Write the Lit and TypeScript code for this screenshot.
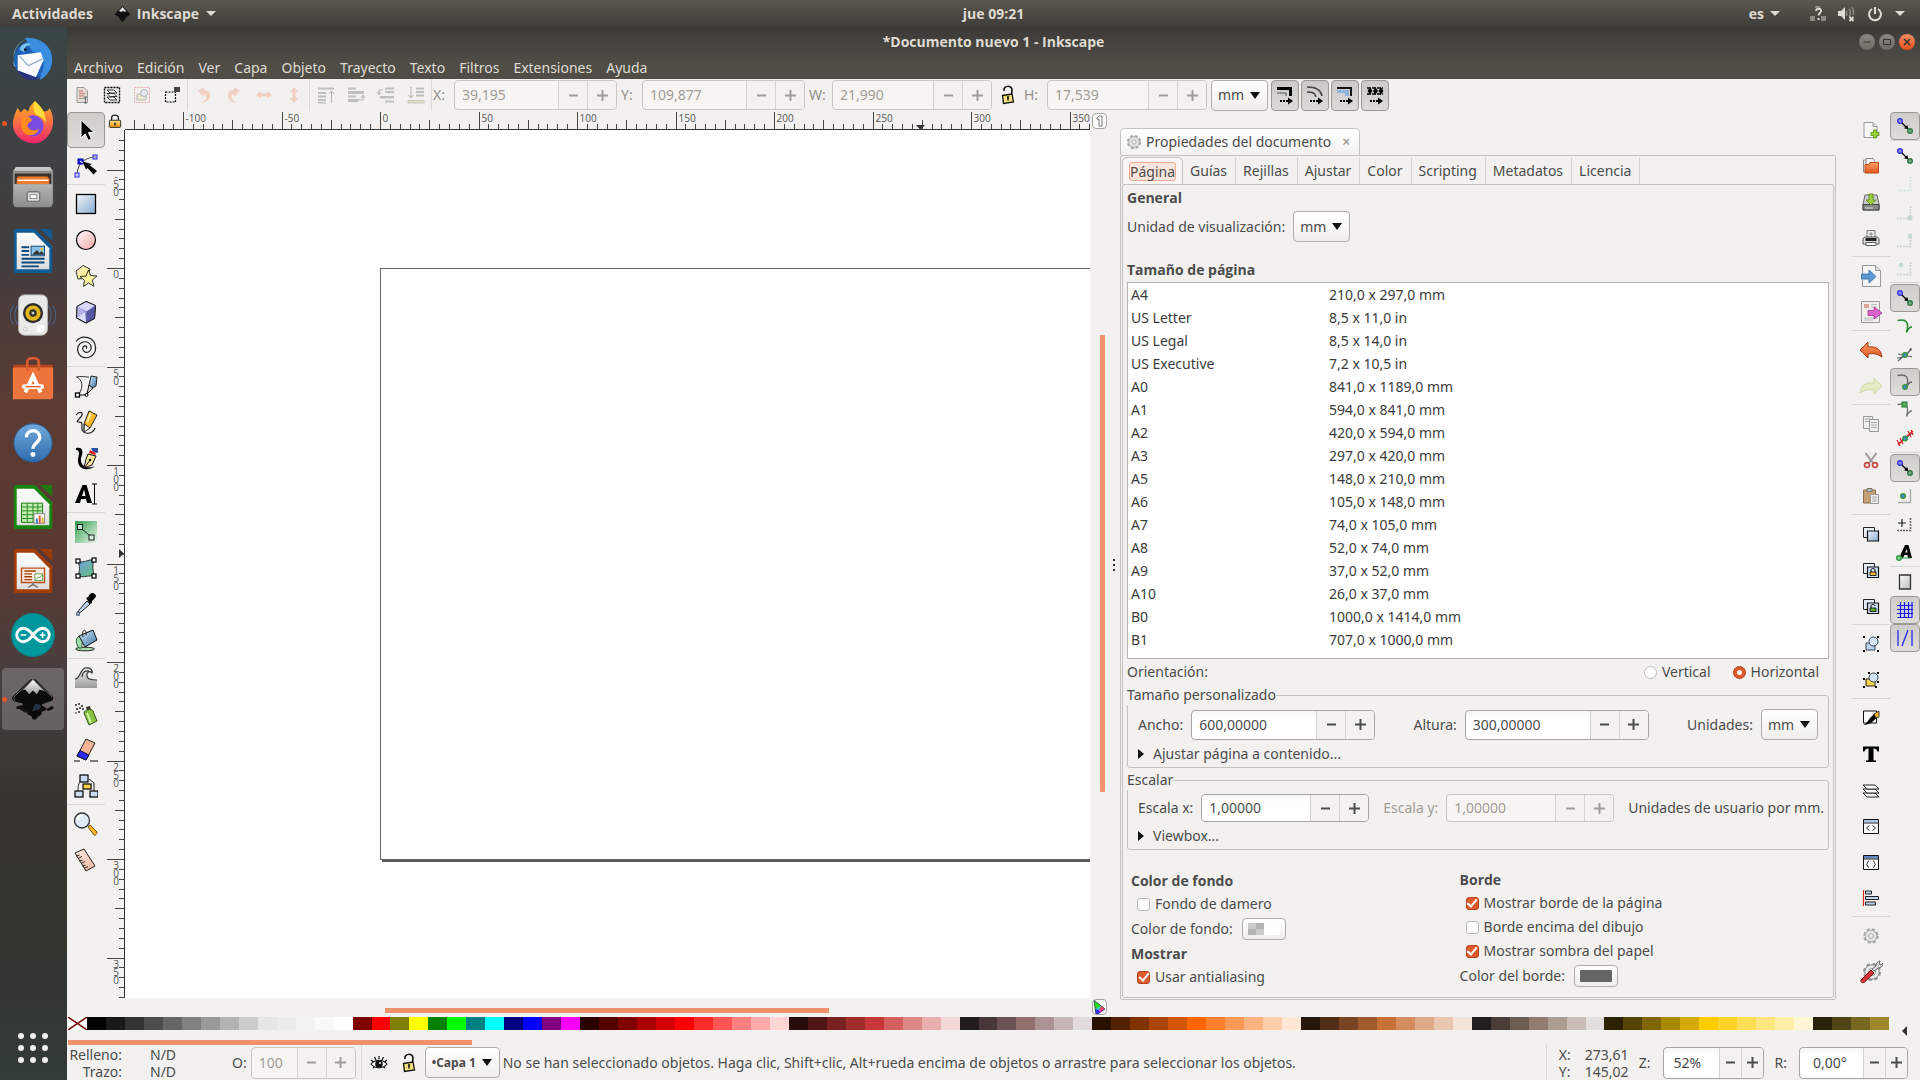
import { LitElement, html, svg, css, TemplateResult } from "lit";
import { customElement } from "lit/decorators.js";
import { classMap } from "lit/directives/class-map.js";

type Shape = ReturnType<typeof svg>;

const nodeDot = (x: number, y: number, c = "#2f9a3c", f = "#4f7fd0") =>
  svg`<circle cx=${x} cy=${y} r="2.3" fill=${f} stroke=${c} stroke-width="1.4"/>`;

const snapArrow = svg`
  <circle cx="7" cy="7" r="2.3" fill="#8f8ff5" stroke="#3535e0" stroke-width="1.4"/>
  <path d="M9 9l5 5" stroke="#000" stroke-width="1.3"/><path d="M15.5 15.5l-4.4-1.2 3.2-3.2z"/>
  ${nodeDot(17, 17, "#2f7a46", "#6fb08a")}`;

const orderBars = (arrow: Shape) => svg`<g fill="#777">${arrow}</g>`;

/* 24x24 glyphs of the tool, command and snap bars */
const glyphs: Record<string, Shape> = {
  /* tool bar */
  select: svg`<path d="M7 2v18l4.2-4 3 6.4 3.2-1.5-3-6.3h5.8z" stroke="#fff" stroke-width="1"/>`,
  node: svg`<path d="M3 20C4 9 10 4 21 3" fill="none" stroke="#555" stroke-width="1.1"/>
    <rect x="19" y="1" width="4" height="4" fill="#aab" stroke="#4848e8" stroke-width="1.2"/>
    <rect x="1" y="19" width="4" height="4" fill="#ccf" stroke="#4848e8" stroke-width="1.2"/>
    <rect x="4" y="5" width="5" height="5" fill="#2222d8" stroke="#0000a0"/><path d="M8.500 7.500l3.500 8 1.500-1.500 6 6.500 3.500-3.500-7-5.500 1.500-1.500z"/><path d="M6 7l3 2" stroke="#fff"/>`,
  rect: svg`<rect x="2.500" y="2.500" width="19" height="19" fill="url(#g-blue)" stroke="#000" stroke-width="1.3"/>`,
  ellipse: svg`<circle cx="12" cy="12" r="9.500" fill="url(#g-pink)" stroke="#000" stroke-width="1.200"/>`,
  star: svg`<path d="M2 7l7-5.500 7 3.500-2 9-10 1z" fill="url(#g-yellow)" stroke="#333"/>
    <path d="M14.500 6l2.200 5.500 6.300.5-4.700 4 1.700 6.300-5.500-3.300-5 3.500 1-6.300-4.500-3.700 6-.500z" fill="#fdf3a0" stroke="#333"/>`,
  cube: svg`<path d="M12 1.500l9.500 4-1 13L12 23l-9.500-5 .5-11.500z" fill="#8787cf" stroke="#222"/>
    <path d="M3 6.500l9-5 9.500 4-8.500 6z" fill="#d6d6f6"/><path d="M3 6.500l8 5-8.500 6z" fill="#b3b3ea"/><path d="M12.500 11.500l9-6-1 13L12 23z" fill="#5757a8"/><path d="M11 12l-8 5.500 9 5z" fill="#dcdcfa"/>
    <path d="M12 1.500l9.500 4-1 13L12 23l-9.500-5 .5-11.500z" fill="none" stroke="#222"/>`,
  spiral: svg`<path d="M12 12.500c1.500-1 .500-3-1.300-2.600-2.500.600-2.700 4.100-.500 5.600 3 2 7-.200 7-4 0-4-4-6.500-8-5.500-5 1.300-7 7-4.700 11.500 2.500 4.500 8.500 5.500 13 2.500 3.500-2.500 5-6.500 3.500-11.500-1.500-5-6-7.300-11-7.300-3 0-6 1.800-7.800 4.300" fill="none" stroke="#222" stroke-width="1.200"/>`,
  pen: svg`<path d="M2 3c5-1 10 0 13 0M3 3c5 3 7 9 2 17" fill="none" stroke="#333"/><path d="M4 21h9" stroke="#000"/>
    <rect x="1.500" y="19" width="4" height="4" fill="#fff" stroke="#000" stroke-width="1.300"/><circle cx="12.500" cy="21" r="1.500" fill="#fff" stroke="#000"/>
    <path d="M17 2l6 1-1 9-4 2-3-3z" fill="url(#g-steel)" stroke="#222"/><path d="M15 11l4 3-6 6z" fill="#ddd" stroke="#000"/>`,
  pencil: svg`<path d="M2 5c3-4 7-3 6 0s-7 7-4 7 4 0 4 3-1 7 4 8 8-2 9-5" fill="none" stroke="#222" stroke-width="1.200"/>
    <path d="M15 1l8 4-7 13-6 3 0-7z" fill="#fbb829" stroke="#222"/><path d="M10.500 14l5.500 4-6 4z" fill="#fff" stroke="#333"/><path d="M17 3l-4 9" stroke="#fff0a0" stroke-width="2"/>`,
  calligraphy: svg`<path d="M2 2c8-2 7 5 5 10-1 7 5 12 14 8-7 6-18 4-17-7C5 8 6 4 2 4z"/>
    <path d="M17 2h7v5l-5-1z" fill="#2b4fa0"/><path d="M16 4l6 3-1 2-6-2z" fill="#d22"/><path d="M14 8l8 2-4 9-8 3 2-9z" fill="#f9e29a" stroke="#111"/><path d="M11 21l5-7" stroke="#111"/><circle cx="16" cy="14" r="1.200"/>`,
  text: svg`<path d="M1 21L8.500 3h4L18 21h-5l-1-4H7l-1 4zM8 14h3.500L10 7.500z" fill-rule="evenodd"/><path d="M18 2h5M20.500 2v20M18 22h5" stroke="#000" fill="none"/>`,
  gradient: svg`<rect x="1" y="1" width="22" height="22" fill="url(#g-green)"/><path d="M6 7l11 10" stroke="#222"/><rect x="3.500" y="4.500" width="5" height="5" fill="#bfe6c8" stroke="#222"/><rect x="15" y="15" width="5" height="5" fill="#d8f2dc" stroke="#222"/>`,
  mesh: svg`<path d="M4 5c6 3 9-2 16-1-2 6-1 10 0 16-6-1-9 2-16 0 2-6 2-9 0-15z" fill="url(#g-mesh)" stroke="#333"/>
    <g fill="#fff" stroke="#000" stroke-width="1.200"><rect x="2" y="3" width="4" height="4"/><rect x="18" y="2" width="4" height="4"/><rect x="2" y="18" width="4" height="4"/><rect x="18" y="18" width="4" height="4"/></g>`,
  dropper: svg`<path d="M13 9l3 3-9 8-3 1 1-3z" fill="#b9d6f2" stroke="#222"/><path d="M12 6l2-1 2-3c3-3 8 1 5 4l-3 3v2l-2 1z"/><path d="M4 19c2 3 2 5 0 5s-2-2 0-5z" fill="#89a7d8" stroke="#456"/>`,
  bucket: svg`<ellipse cx="11" cy="21" rx="9.500" ry="1.800" fill="#a8e0b2" stroke="#222"/><path d="M5 8c-4 3-3 8 0 12h3c-1-4 1-5 1-8z" fill="#9fdcab" stroke="#2c5a36"/>
    <path d="M5 8l14-6 4 10-12 7z" fill="url(#g-steel)" stroke="#111"/><path d="M9 9c-2-8 4-9 3-2" fill="none" stroke="#222"/>`,
  tweak: svg`<path d="M1 13c5 0 5-9 10-11 5-1 8 2 7 5-3-3-6 0-5 3 0 3 4 4 10 4v8H1z" fill="url(#g-grey)"/><path d="M1 13c5 0 5-9 10-11 5-1 8 2 7 5-3-3-6 0-5 3 0 3 4 4 10 4M8 11c0-4 3-7 7-6" fill="none" stroke="#333" stroke-width="1.200"/>`,
  spray: svg`<g fill="#222"><circle cx="2" cy="3" r="1"/><circle cx="5" cy="2" r="1"/><circle cx="8" cy="4" r="1"/><circle cx="3" cy="7" r="1"/><circle cx="6" cy="6" r="1"/><circle cx="9" cy="7" r="1"/><circle cx="5" cy="10" r="1"/><circle cx="2" cy="11" r=".8"/></g>
    <path d="M12 5l4-1 1 4-4 1z" fill="#333"/><path d="M10 11c0-3 8-5 9-2l4 10-8 4z" fill="#86c440" stroke="#33511a"/><path d="M13 11l4 10" stroke="#d6f0a8" stroke-width="2"/>`,
  eraser: svg`<path d="M12 1l9 4-9 17-9-4z" fill="#f4b295" stroke="#222"/><path d="M6 12.500l9 4.500-3 5-9-4z" fill="#2a2af0" stroke="#113"/><path d="M0 23h6M16 23h8" stroke="#000" stroke-width="1.200"/>`,
  connector: svg`<path d="M8 6C4 9 4 13 4 17M15 5l5 4v8" fill="none" stroke="#222"/><g stroke="#000" stroke-width="1.200"><rect x="6" y="1" width="8" height="7" fill="#c9dbf3"/><rect x="1" y="17" width="8" height="6" fill="#c9dbf3"/><rect x="16" y="17" width="8" height="6" fill="#c9dbf3"/><rect x="9" y="10" width="8" height="5" fill="#ffd54a"/></g>`,
  zoom: svg`<circle cx="8" cy="8.500" r="7.500" fill="#dfeaf6" stroke="#333" stroke-width="1.300"/><path d="M4 8a5 5 0 0 1 5-5" stroke="#fff" stroke-width="2" fill="none"/><path d="M14 15l2-2 7 7c0 2-2 4-3 3z" fill="#fbb62c" stroke="#7a5200"/>`,
  measure: svg`<path d="M1 5l9-4 11 17-9 5z" fill="url(#g-skin)" stroke="#222"/><path d="M2.500 8l3-1M4 10.500l4-2M5.500 13l3-1M7 15.500l4-2M8.500 18l3-1M10 20.500l4-2" stroke="#222"/>`,
  /* command bar */
  fileNew: svg`<path d="M5 4.500h9l4 4v11H5z" fill="#f6f6f6" stroke="#999"/><path d="M14 4.500v4h4" fill="#ddd" stroke="#999"/><path d="M14.500 12h3v2.500H20v3h-2.500V20h-3v-2.500H12v-3h2.500z" fill="#9bd23c" stroke="#5a8a12" stroke-width=".8"/>`,
  fileOpen: svg`<path d="M4.500 6h5v12h-5z" fill="#eee" stroke="#888"/><path d="M7 4.500h7l2 3v5H7z" fill="#f6f6f6" stroke="#888"/><path d="M6 10.500h4l1-2h8.500v10.500H6z" fill="url(#g-orange)" stroke="#c64a16"/>`,
  save: svg`<path d="M6 5h12l2 9v6H4v-6z" fill="#ccc" stroke="#666"/><path d="M4 14.500h16V20H4z" fill="#888" stroke="#444"/><path d="M10 4h4v6h3l-5 5-5-5h3z" fill="#9ccf3e" stroke="#568015" stroke-width=".8"/><path d="M6 18h8" stroke="#ddd"/>`,
  print: svg`<path d="M8 4.500h8V12H8z" fill="#eee" stroke="#777"/><path d="M12 6v5M10 8h4" stroke="#888"/><path d="M5.500 11h13l1.500 2v5H4v-5z" fill="#ddd" stroke="#555"/><path d="M6.500 12h11v3h-11z" fill="#222"/><path d="M7 16.500h10v3H7z" fill="#fff" stroke="#555"/>`,
  fileImport: svg`<path d="M3.500 1.500h13l5 5v16h-18z" fill="#f3f3f3" stroke="#999"/><path d="M16.500 1.500v5h5" fill="#ddd" stroke="#999"/><path d="M2.500 10H10V6l7 6.500L10 19v-4H2.500z" fill="#5c9bd6" stroke="#2d679f" stroke-width=".8"/>`,
  fileExport: svg`<path d="M2.500 1.500h18v21h-18z" fill="#f1eeee" stroke="#999"/><path d="M5 4.500h5M5 7h5M12 4.500h6M12 7h6M5 18h13M5 20h9" stroke="#bbb"/><path d="M5 4h5v4H5z" fill="#d9a69a"/><path d="M9 10.500h6V7l8 6-8 6v-3.500H9z" fill="#dc62cf" stroke="#98308c" stroke-width=".8"/>`,
  undo: svg`<path d="M1 12l8-8v5c8-1 13 2 14 10-4-3-8-4-14-3v4z" fill="url(#g-orange)" stroke="#a33c12"/>`,
  redo: svg`<path d="M23 12l-8-8v5C7 8 2 11 1 19c4-3 8-4 14-3v4z" fill="#e3ecc4" stroke="#cdd8a8"/>`,
  copy: svg`<g fill="#eee" stroke="#999"><path d="M4.500 4.500h9v12h-9z"/><path d="M10.500 7.500h9v12h-9z"/></g><path d="M6 7h6M6 9.500h4M12 10.500h6M12 13h6M12 15.500h6" stroke="#aaa"/>`,
  cut: svg`<path d="M6.500 5l7.500 10M17.500 5L10 15" stroke="#999" stroke-width="2"/><circle cx="8" cy="17" r="2.400" fill="none" stroke="#cf4b4b" stroke-width="1.800"/><circle cx="16" cy="17" r="2.400" fill="none" stroke="#cf4b4b" stroke-width="1.800"/>`,
  paste: svg`<path d="M4.500 6h12v13h-12z" fill="#c79f74" stroke="#8e6f4c"/><path d="M8 4.500h5v3H8z" fill="#bbb" stroke="#777"/><path d="M11.500 10.500h8v9h-8z" fill="#eee" stroke="#999"/><path d="M13 13h5M13 15h5M13 17h5" stroke="#aaa"/>`,
  duplicate: svg`<path d="M4.500 5.500h11v10h-11z" fill="#e8eef6" stroke="#222"/><path d="M8.500 9h11v10h-11z" fill="url(#g-blue)" stroke="#111" stroke-width="1.200"/>`,
  clone: svg`<path d="M4.500 5.500h11v10h-11z" fill="#e8eef6" stroke="#222"/><path d="M8.500 9h11v10.500h-11z" fill="#cfe0f2" stroke="#111" stroke-width="1.200"/><path d="M12 14v-2c0-2 4-2 4 0v2" fill="none" stroke="#000"/><path d="M11 14h6v3.500h-6z" fill="#f6b73c" stroke="#000" stroke-width=".8"/>`,
  unlink: svg`<path d="M4.500 5.500h11v10h-11z" fill="#e8eef6" stroke="#222"/><path d="M8.500 9h11v10.500h-11z" fill="#cfe0f2" stroke="#111" stroke-width="1.200"/><path d="M12 14v-2c0-2 4-2 4 0" fill="none" stroke="#000"/><path d="M11 14h6v3.500h-6z" fill="#5aae3a" stroke="#000" stroke-width=".8"/>`,
  group: svg`<path d="M7 11h9v7H7z" fill="#bcd3ee" stroke="#345"/><circle cx="14.500" cy="9.500" r="4.500" fill="#d3e2f4" stroke="#345"/><path d="M4 4h2v2H4zM18 4h2v2h-2zM4 18h2v2H4zM18 18h2v2h-2z"/>`,
  ungroup: svg`<path d="M7 11h9v7H7z" fill="#ffd54a" stroke="#222"/><circle cx="14.500" cy="9.500" r="4.500" fill="#d3e2f4" stroke="#345"/><path d="M4 10h2v2H4zM4 18h2v2H4zM16 18h2v2h-2zM9 4h2v2H9zM18 4h2v2h-2zM18 13h2v2h-2z"/>`,
  fillStroke: svg`<path d="M4.500 5h13v12h-13z" fill="#fff" stroke="#111"/><path d="M4 19c3-1 5-4 7-7l5-5 3 3c-4 5-8 9-15 9z"/><path d="M15 8l5-3v6l-3 1z" fill="#f7b52a" stroke="#222" stroke-width=".8"/>`,
  textDialog: svg`<path d="M4 4.500h16v5h-1.500c-.5-2-1.500-3-4-3V17c0 1 .5 1.500 2.500 1.500V20H7v-1.500c2 0 2.500-.5 2.500-1.500V6.500c-2.500 0-3.500 1-4 3H4z"/>`,
  layers: svg`<g fill="#fff" stroke="#222"><path d="M4 15h12l4 4H8z"/><path d="M4 11h12l4 4H8z"/><path d="M4 7h12l4 4H8z"/></g>`,
  xml: svg`<path d="M4.500 5.500h15v14h-15z" fill="#f8f8f8" stroke="#111"/><path d="M5 6h14v2.500H5z" fill="#a9c6e8"/><path d="M4.500 9h15" stroke="#222"/><path d="M10.500 11.500L7.500 14l3 2.500M13.500 11.500l3 2.500-3 2.500" fill="none" stroke="#333"/>`,
  selectors: svg`<path d="M4.500 5.500h15v14h-15z" fill="#f8f8f8" stroke="#111"/><path d="M5 6h14v2.500H5z" fill="#5d85c4"/><path d="M4.500 9h15" stroke="#222"/><path d="M10 11c-2 0-1 3-2.500 3.300C9 14.500 8 17.500 10 17.500M14 11c2 0 1 3 2.500 3.300-1.500.2-.5 3.200-2.500 3.200" fill="none" stroke="#333"/>`,
  align: svg`<path d="M4.500 4v16" stroke="#d22" stroke-width="1.200"/><g fill="#b9d2ee" stroke="#222"><path d="M6.500 5h6v3h-6z"/><path d="M6.500 10.500h13v3h-13z"/><path d="M6.500 16h10v3h-10z"/></g>`,
  gear: svg`<circle cx="12" cy="12" r="6.300" fill="#ddd" stroke="#aaa" stroke-width="3" stroke-dasharray="3 1.950"/><circle cx="12" cy="12" r="5.800" fill="#e4e4e4" stroke="#aaa"/><circle cx="12" cy="12" r="2.300" fill="#eee" stroke="#aaa"/>`,
  tools: svg`<circle cx="13" cy="12" r="7.600" fill="#e6e6e6" stroke="#999" stroke-width="3" stroke-dasharray="3.500 2.500"/><circle cx="13" cy="12" r="7.200" fill="#e9e9e9" stroke="#888"/><circle cx="13" cy="12" r="3.500" fill="#f2f1f0" stroke="#999"/>
    <path d="M2 20L12 10l3 3L5 22.500c-2 1-4-1-3-2.500z" fill="#d0343a" stroke="#86151a"/><path d="M13 9l4-3c0-3 2-5 4-5l-1 3 2 1 2-2c0 3-2 5-5 5l-4 3z" fill="#ddd" stroke="#666"/>`,
  /* snap bar */
  snap: snapArrow,
  snapBox: svg`<path d="M5 18.500h12.500V5" fill="none" stroke="#d9e8da" stroke-width="2" stroke-dasharray="2 1"/>`,
  snapEdge: svg`<path d="M4 18.500h13.500V5" fill="none" stroke="#d3d7d3" stroke-width="2" stroke-dasharray="2 1"/><circle cx="17" cy="18" r="2.600" fill="#c3dacb"/>`,
  snapCorner: svg`<path d="M4 18.500h13.500V5" fill="none" stroke="#d3d7d3" stroke-width="2" stroke-dasharray="2 1"/><circle cx="17" cy="8" r="2.400" fill="#c3dacb"/>`,
  snapMid: svg`<path d="M4 18.500h13.500V5" fill="none" stroke="#d3d7d3" stroke-width="2" stroke-dasharray="2 1"/><circle cx="8" cy="9" r="2.200" fill="#c3dacb"/>`,
  snapPath: svg`<path d="M4.500 6.500c9-2 12 2 9 11.500M19 13c-2 0-4 2-5.500 5.500" fill="none" stroke="#1f8a2a" stroke-width="1.500"/>`,
  snapCross: svg`<path d="M5 19L19 7M4 16c6 0 11-3 14-10M5 12l14 3" fill="none" stroke="#666" stroke-width="1.200"/>${nodeDot(12, 13)}`,
  snapCusp: svg`<path d="M4.500 5.500c9-2 12 2 9 11.500M19 12c-2 0-4 1-5 5" fill="none" stroke="#666" stroke-width="1.300"/>${nodeDot(12, 17)}`,
  snapSmooth: svg`<path d="M4.500 6.500c9-2 12 2 9 11.500M19 13c-2 0-4 2-5.500 5.500" fill="none" stroke="#777" stroke-width="1.300"/><rect x="9" y="4" width="5" height="5" fill="#55b065" stroke="#1f7a2a"/>`,
  snapLine: svg`<path d="M5 18L19 7" stroke="#666" stroke-width="1.300"/><path d="M4 14l3 6M7 12l3 6M5 19l5-5M15 5l3 6M18 4l2 5M14 10l6-5" stroke="#d22" stroke-width="1.300"/>${nodeDot(12, 12.500)}`,
  snapCenter: svg`<path d="M5 18.500h12.500V5" fill="none" stroke="#aaa" stroke-width="1.300"/>${nodeDot(10, 12)}`,
  snapRot: svg`<path d="M4 18.500h13.500V6" fill="none" stroke="#666" stroke-width="1.600" stroke-dasharray="2 1"/><path d="M9 7v8M5 11h8" stroke="#222" stroke-width="1.200"/>`,
  snapText: svg`<path d="M6 18l6-13h3.500L19 18h-4l-.5-3h-3L10 18zM12 12.500h2.300L14 9z" fill-rule="evenodd"/><path d="M4 18h14" stroke="#2f9a3c"/>${nodeDot(6, 18, "#2f9a3c", "#8fd09a")}`,
  snapPage: svg`<path d="M6.500 5h11v14h-11z" fill="url(#g-page)" stroke="#333" stroke-width="1.300"/>`,
  snapGrid: svg`<path d="M4 7.500h16M4 11.500h16M4 15.500h16M7.500 4v16M11.500 4v16M15.500 4v16M4.500 19.500h15M19 4v16" stroke="#1a1af0" stroke-width="1.200"/>`,
  snapGuide: svg`<path d="M5 4v16M19 4v16M9 20l6-16" stroke="#1a1af0" stroke-width="1.200"/>`,
  /* options bar */
  selAll: svg`<path d="M7 4.500h7l3.500 3.500v11.500H7z" fill="#e5dcd8" stroke="#999"/><path d="M9 8h4M9 10.500h6M9 13h5" stroke="#cf9583" stroke-width="1.400"/><path d="M9 15.500h6" stroke="#999"/><path d="M15.500 14v6M14 14h3M14 20h3" stroke="#666"/>`,
  selLayers: svg`<rect x="4.500" y="4.500" width="15" height="15" fill="none" stroke="#000" stroke-width="1.400" stroke-dasharray="2 1"/><g fill="#fff" stroke="#333"><path d="M7 14h7l3 3h-7z"/><path d="M7 10.500h7l3 3h-7z"/><path d="M7 7h7l3 3h-7z"/></g>`,
  deselect: svg`<rect x="4.500" y="4.500" width="15" height="15" fill="none" stroke="#d84a4a" stroke-dasharray="2 1"/><path d="M7 11h9v6H7z" fill="#e8dc9c" stroke="#666"/><circle cx="14" cy="10" r="3.500" fill="#d3e2f4" stroke="#556"/>`,
  selTouch: svg`<rect x="5.500" y="9" width="10" height="10" fill="none" stroke="#000" stroke-width="1.200" stroke-dasharray="2 1"/><rect x="14" y="4" width="6" height="5" fill="#444"/>`,
  rotL: svg`<path d="M6 8l6-4v3c9 0 8 13-3 13 6-2 7-8 3-9v3z" fill="#f0a080"/>`,
  rotR: svg`<path d="M18 8l-6-4v3c-9 0-8 13 3 13-6-2-7-8-3-9v3z" fill="#f0a080"/>`,
  flipH: svg`<path d="M4 12l5-4v2.500h6V8l5 4-5 4v-2.500H9V16z" fill="#f0a080"/>`,
  flipV: svg`<path d="M12 4l4 5h-2.500v6H16l-4 5-4-5h2.500V9H8z" fill="#f0a080"/>`,
  toTop: orderBars(svg`<path d="M4 4.500h16v2H4zM4 9h8v2H4zM4 12.500h8v2H4zM4 16h8v2H4zM4 19h8v1.500H4z"/><path d="M17.500 8v12M15 11l2.500-3 2.500 3" fill="none" stroke="#555"/>`),
  raise: orderBars(svg`<path d="M4 4.500h8v2H4zM4 8h16v3H4zM4 12.500h8v2H4zM4 16h10v3H4z"/><path d="M14 17h5v-4M17 15l2-3 2 3" fill="none" stroke="#555"/>`),
  lower: orderBars(svg`<path d="M11 4.500h9v2h-9zM11 8h9v2h-9zM6 13h14v2.500H6zM11 17.500h9v2h-9z"/><path d="M9 7H5v4M3 9l2 3 2-3" fill="none" stroke="#555"/>`),
  toBottom: orderBars(svg`<path d="M12 4.500h8v2h-8zM12 8h8v2h-8zM12 11.500h8v2h-8z"/><path d="M4 17.500h16v2.500H4z" fill="#d8c777" stroke="#777" stroke-width=".8"/><path d="M7 4v11M4.500 12L7 15l2.500-3" fill="none" stroke="#555"/>`),
  lockOpen: svg`<path d="M8 8c-1-6 8-6 8-1l-.5 5" fill="none" stroke="#000" stroke-width="1.500"/><path d="M6.500 12.500l9.500-1.500 1.500 8-10 1.500z" fill="#f3e27c" stroke="#111" stroke-width="1.300"/><path d="M12 13.500v4M11 14h2" stroke="#111" stroke-width="1.500"/>`,
  lock: svg`<path d="M7.500 12V8c0-5 9-5 9 0v4" fill="none" stroke="#222" stroke-width="1.800"/><rect x="4.500" y="11" width="15" height="9.500" rx="1" fill="url(#g-gold)" stroke="#222" stroke-width="1.200"/><path d="M12 14v4" stroke="#222" stroke-width="2"/>`,
  eye: svg`<path d="M4 13c4-5 12-5 16 0-4 5-12 5-16 0z" fill="#fff" stroke="#111" stroke-width="1.200"/><circle cx="12" cy="13" r="3.800" fill="#111"/><circle cx="13" cy="12" r="1" fill="#fff"/><path d="M4 9l2.500 2M7.500 6l1.500 3M12 5v3M16.500 6L15 9M20 9l-2.500 2M6 17l1.500-1M18 17l-1.500-1" stroke="#111" stroke-width="1.200"/>`,
  affStroke: svg`<path d="M4 4h15v9h-3V7H4z"/><path d="M4 10h9v3" fill="none" stroke="#555"/><path d="M7 18h9" stroke="#000" stroke-width="2" stroke-dasharray="2 1"/><path d="M15 14.500l5 3.500-5 3.500z"/>`,
  affCorner: svg`<path d="M4 4c9 0 14 3 15 9M4 9c6 0 8 1 9 5" fill="none" stroke="#444" stroke-width="1.500"/><path d="M7 18h9" stroke="#000" stroke-width="2" stroke-dasharray="2 1"/><path d="M15 14.500l5 3.500-5 3.500z"/>`,
  affGradient: svg`<path d="M4 4h15v9h-2V6H4z" fill="#111"/><path d="M4 7h12v6h-4v-3H4z" fill="#8fb3e0"/><path d="M7 18h9" stroke="#000" stroke-width="2" stroke-dasharray="2 1"/><path d="M15 14.500l5 3.500-5 3.500z"/>`,
  affPattern: svg`<path d="M4 5h16M4 11h16" stroke="#000" stroke-width="1.500" stroke-dasharray="4 1"/><path d="M7 4.500L4.500 8 7 11.500 9.500 8zM12.500 4.500L10 8l2.500 3.500L15 8zM18 4.500L15.500 8l2.500 3.500L20.500 8z"/><path d="M7 18h9" stroke="#000" stroke-width="2" stroke-dasharray="2 1"/><path d="M15 14.500l5 3.500-5 3.500z"/>`,
};

/* 48x48 launcher pictures */
const officePage = (dark: string, inner: Shape) => svg`
  <path d="M6 1h20l18 18v25a3 3 0 0 1-3 3H6a2 2 0 0 1-2-2V3a2 2 0 0 1 2-2z" fill=${dark}/>
  <path d="M31 1h13v12z" fill=${dark} opacity=".85"/><path d="M7 5h18l16 16v22H7z" fill="url(#g-sheet)"/>${inner}`;

const launchers: { name: string; active?: boolean; running?: boolean; art: Shape }[] = [
  { name: "Thunderbird", art: svg`<circle cx="24" cy="25" r="20" fill="#1e62b8"/><path d="M18 2c-12 5-18 18-12 30l-2-1C2 20 6 8 18 2z" fill="#6db7ee"/>
    <path d="M16 2c14-1 28 8 28 22 0 12-7 19-13 22l2-8c6-9 0-20-10-22z" fill="#3a8ee0"/><path d="M8 20l24-3 3 8-8 18L8 36z" fill="#fbfbff"/><path d="M10 21l9 10 15-7" fill="none" stroke="#9fb4cf" stroke-width="1.500"/><path d="M8 36l19 7 3-2-2 5C18 47 11 43 8 36z" fill="#28327e"/><path d="M10 14c2-6 8-8 12-5l-6 2-1 6z" fill="#79c6f2"/><circle cx="16" cy="14" r="1.600" fill="#123"/>` },
  { name: "Firefox", running: true, art: svg`<path d="M26 1c4 4 7 7 9 11 4 0 6-2 6-4 5 8 5 17 2 24-4 9-12 14-20 13C11 44 3 35 3 25 3 18 6 13 8 8l3 5 4-4 4 3c1-5 4-8 7-11z" fill="url(#g-fox)"/>
    <circle cx="24" cy="27" r="11" fill="#7a4be0"/><path d="M14 18c3-2 8 0 9 3-2 2-4 2-5 6 2 5 8 6 12 3-2 8-13 9-17 2-2-4-2-10 1-14z" fill="#ff8a1c"/><path d="M26 1c4 4 7 7 9 11 1 4 3 8 2 12-1-5-6-7-10-9-3-3-3-9-1-14z" fill="#ffdc3c"/>` },
  { name: "Archivos", art: svg`<path d="M6 3h36l3 5H3z" fill="#c8c8c6"/><path d="M3 7h42v33a4 4 0 0 1-4 4H7a4 4 0 0 1-4-4z" fill="#8f8f8d"/><path d="M5 10h38v11H5z" fill="#3a322c"/><path d="M8 13h31l2 3v5H7v-6z" fill="#ef7c2c"/><path d="M8 17h32" stroke="#fff" stroke-width="1.500"/><path d="M4 21h40v21a3 3 0 0 1-3 3H7a3 3 0 0 1-3-3z" fill="url(#g-silver)"/><rect x="18" y="29" width="13" height="10" rx="2" fill="#ddd" stroke="#777" stroke-width="1.500"/><rect x="21" y="32" width="7" height="4" fill="#fff" stroke="#888"/>` },
  { name: "LibreOffice Writer", art: officePage("#0f5c96", svg`<path d="M12 20h8M12 24h8M12 28h8M12 32h24M12 36h24M12 40h18" stroke="#0b4a7c" stroke-width="2"/><rect x="22" y="19" width="14" height="10" fill="#8ec1e6" stroke="#0b4a7c"/><path d="M23 28l5-5 3 3 2-2 3 4z" fill="#333"/><circle cx="33" cy="22" r="1.500" fill="#f3c32c"/>`) },
  { name: "Rhythmbox", art: svg`<path d="M4 14c-5 6-5 14 0 20M8 14c-4 6-4 14 0 20M44 14c5 6 5 14 0 20M40 14c4 6 4 14 0 20" fill="none" stroke="#4b5f86" stroke-width="1.200"/><rect x="9" y="3" width="30" height="42" rx="6" fill="#e9e9e7" stroke="#bbb"/><circle cx="24" cy="22" r="10.500" fill="#2e2e2e"/><circle cx="24" cy="22" r="8" fill="#e2b81c"/><circle cx="24" cy="22" r="4" fill="#3a3a32"/><circle cx="24" cy="22" r="1.500" fill="#ccc"/><circle cx="32" cy="38" r="4" fill="#fff"/><circle cx="16" cy="39" r="2" fill="none" stroke="#ccc"/>` },
  { name: "Software", art: svg`<path d="M3 9h42l-2 6H5z" fill="#b8451c"/><path d="M3 12h42v30a3 3 0 0 1-3 3H3z" fill="url(#g-bag)"/><path d="M18 15V6c0-5 12-5 12 0v9" fill="none" stroke="#d65a2a" stroke-width="3"/><path d="M16 38l8-17 8 17" fill="none" stroke="#fff" stroke-width="4"/><path d="M15 32h18" stroke="#fff" stroke-width="5" stroke-linecap="round"/><path d="M16 32h16" stroke="#e8602c" stroke-width="1.500"/>` },
  { name: "Ayuda", art: svg`<circle cx="24" cy="24" r="20" fill="url(#g-help)" stroke="#2d5a8e"/><path d="M17 18c0-9 14-9 14 0 0 6-7 6-7 12" fill="none" stroke="#fff" stroke-width="3.500"/><circle cx="24" cy="36" r="2.600" fill="#fff"/>` },
  { name: "LibreOffice Calc", art: officePage("#16850e", svg`<path d="M12 20h22v20H12z" fill="#bfeab0" stroke="#1b7a12"/><path d="M12 24h22M12 28h22M12 32h22M12 36h22M18 20v20M24 20v20M29 20v20" stroke="#2a8a20"/><rect x="25" y="31" width="11" height="10" fill="#fff" stroke="#888"/><path d="M27 36h2v5h-2z" fill="#2d7bd0"/><path d="M30 33h2v8h-2z" fill="#e2582a"/><path d="M33 35h2v6h-2z" fill="#eba92a"/>`) },
  { name: "LibreOffice Impress", art: officePage("#a33e03", svg`<path d="M12 21h24v15H12z" fill="#fbe9df" stroke="#b4511c" stroke-width="1.500"/><path d="M15 27h8M15 30h8M15 33h8M15 24h12" stroke="#a33e03" stroke-width="1.500"/><path d="M26 27h8v7h-8z" fill="#fff" stroke="#5a9a4a"/><path d="M27 33l3-3 1 1 3-3" stroke="#3c9a2a" fill="none"/><path d="M24 36v3M19 41l5-3 5 3" stroke="#777" fill="none" stroke-width="1.500"/>`) },
  { name: "Arduino IDE", art: svg`<circle cx="24" cy="24" r="22.500" fill="#00979c" stroke="#0c7d82"/><path d="M24 24c-4-5-7-7-10-7a7 7 0 0 0 0 14c3 0 6-2 10-7s7-7 10-7a7 7 0 0 1 0 14c-3 0-6-2-10-7z" fill="none" stroke="#fff" stroke-width="3"/><path d="M11 24h6M31 24h6M34 21v6" stroke="#fff" stroke-width="1.700"/>` },
  { name: "Inkscape", active: true, running: true, art: svg`<path d="M24 3c-1 0-2 0-3 1L3 21c-3 4 2 6 8 7 4 1 3 3-1 3-5 2 1 4 6 5 5 1 1 3 2 4 3 2 5 1 5 4 1 2 4 2 6-1 2-2 5-3 4-5 1-2 6-1 5-4-1-2-4-2-5-4 5-3 14-3 12-8L27 4c-1-1-2-1-3-1z" fill="#0b0b0b"/><path d="M24 4L13 15l3-1 4 5 4-4 4 4 3-5 5 2z" fill="url(#g-snow)"/><path d="M24 3L4 22l1 4M24 3l20 19" fill="none" stroke="#666"/><path d="M40 35l4-2M8 33c4-1 5 3 9 4" stroke="#111" stroke-width="3" stroke-linecap="round"/><path d="M26 29c6 0 8 3 4 6l-7 2z" fill="#26313f"/>` },
];

const toolGroups = [
  ["select", "node"],
  ["rect", "ellipse", "star", "cube", "spiral"],
  ["pen", "pencil", "calligraphy", "text"],
  ["gradient", "mesh", "dropper", "bucket"],
  ["tweak", "spray", "eraser", "connector"],
  ["zoom", "measure"],
];

const commandGroups = [
  ["fileNew", "fileOpen", "save", "print"],
  ["fileImport", "fileExport"],
  ["undo", "redo"],
  ["copy", "cut", "paste"],
  ["duplicate", "clone", "unlink"],
  ["group", "ungroup"],
  ["fillStroke", "textDialog", "layers", "xml", "selectors", "align"],
  ["gear", "tools"],
];

/* a trailing "!" marks a pressed toggle */
const snapGroups = [
  ["snap!"],
  ["snap", "snapBox", "snapEdge", "snapCorner", "snapMid"],
  ["snap!", "snapPath", "snapCross", "snapCusp!", "snapSmooth", "snapLine"],
  ["snap!", "snapCenter", "snapRot", "snapText"],
  ["snapPage", "snapGrid!", "snapGuide!"],
];

/* a trailing "-" marks an unavailable action */
const optionGroups = [
  ["selAll", "selLayers", "deselect-", "selTouch"],
  ["rotL-", "rotR-", "flipH-", "flipV-"],
  ["toTop-", "raise-", "lower-", "toBottom-"],
];

const menus = ["Archivo", "Edición", "Ver", "Capa", "Objeto", "Trayecto", "Texto", "Filtros", "Extensiones", "Ayuda"];
const tabs = ["Página", "Guías", "Rejillas", "Ajustar", "Color", "Scripting", "Metadatos", "Licencia"];

const pageSizes = [
  ["A4", "210,0 x 297,0 mm"],
  ["US Letter", "8,5 x 11,0 in"],
  ["US Legal", "8,5 x 14,0 in"],
  ["US Executive", "7,2 x 10,5 in"],
  ["A0", "841,0 x 1189,0 mm"],
  ["A1", "594,0 x 841,0 mm"],
  ["A2", "420,0 x 594,0 mm"],
  ["A3", "297,0 x 420,0 mm"],
  ["A5", "148,0 x 210,0 mm"],
  ["A6", "105,0 x 148,0 mm"],
  ["A7", "74,0 x 105,0 mm"],
  ["A8", "52,0 x 74,0 mm"],
  ["A9", "37,0 x 52,0 mm"],
  ["A10", "26,0 x 37,0 mm"],
  ["B0", "1000,0 x 1414,0 mm"],
  ["B1", "707,0 x 1000,0 mm"],
];

const palette = (
  "000000 1a1a1a 333333 4d4d4d 666666 808080 999999 b3b3b3 cccccc e6e6e6 ececec f2f2f2 f9f9f9 ffffff " +
  "800000 ff0000 808000 ffff00 008000 00ff00 008080 00ffff 000080 0000ff 800080 ff00ff " +
  "2b0000 550000 800000 aa0000 d40000 ff0000 ff2a2a ff5555 ff8080 ffaaaa ffd5d5 " +
  "280b0b 501616 782121 a02c2c c83737 d35f5f de8787 e9afaf f4d7d7 " +
  "241c1c 483737 6c5353 916f6f ac9393 c8b7b7 e3dbdb " +
  "2b1100 552200 803300 aa4400 d45500 ff6600 ff7f2a ff9955 ffb380 ffccaa ffe6d5 " +
  "28170b 502d16 784421 a05a2c c87137 d38d5f deaa87 e9c6af f4e3d7 " +
  "241f1c 483e37 6c5d53 917c6f ac9d93 c8beb7 e3dedb " +
  "2b2200 554400 806600 aa8800 d4aa00 ffcc00 ffd42a ffdd55 ffe680 ffeeaa fff6d5 " +
  "28220b 504416 786721 a0892c"
).split(" ");

/* canvas view: pixels per millimetre and the place of the page's corner */
const scale = 1.97;
const origin = { x: 255, y: 138 };

const ticks = (from: number, to: number) => {
  const out: number[] = [];
  for (let n = from; n <= to; n += 5) out.push(n);
  return out;
};

@customElement("app-root")
export class AppRoot extends LitElement {
  static styles = css`
    :host {
      display: block;
      font-family: "Noto Sans", "Open Sans", sans-serif;
      font-size: 14px;
      line-height: 20px;
      color: #4c4c4c;
    }
    * { box-sizing: border-box; }
    button, input, select { font: inherit; color: inherit; margin: 0; padding: 0; border: 0; background: none; }
    svg { display: block; flex: none; }
    .defs { position: absolute; width: 0; height: 0; }
    .desktop {
      display: grid;
      grid-template: 27px minmax(0, 1fr) / 67px minmax(0, 1fr);
      height: 100vh;
      overflow: hidden;
      background: #f2f1f0;
    }

    .topbar {
      grid-column: 1 / -1;
      display: grid;
      grid-template-columns: 67px 1fr auto 1fr;
      align-items: center;
      background: linear-gradient(#5b574e, #3f3e39);
      color: #dfdbd2;
      font-family: "Open Sans", sans-serif;
      font-weight: 700;
    }
    .topbar-left { grid-column: 1 / 3; display: flex; align-items: center; padding-left: 12px; gap: 22px; }
    .app-menu { display: flex; align-items: center; gap: 7px; }
    .topbar-right { display: flex; align-items: center; justify-content: flex-end; padding-right: 15px; gap: 12px; }
    .lang { display: flex; align-items: center; gap: 6px; margin-right: 18px; }
    .caret { width: 0; height: 0; border: 5px solid transparent; border-top-color: currentColor; border-bottom-width: 0; }

    .launcher {
      display: flex;
      flex-direction: column;
      background: linear-gradient(#3a4548, #433d3e 22%, #5b3b32 37%, #5a3833 52%, #463f3e 62%, #383530 72%, #33352f 88%, #323b39);
    }
    .launch { position: relative; height: 64px; display: grid; place-items: center; padding-right: 2px; }
    .launch.active::before { content: ""; position: absolute; inset: 1px 3px 1px 2px; border-radius: 4px; background: rgba(255, 255, 255, 0.2); }
    .launch svg { position: relative; }
    .launch.running::after { content: ""; position: absolute; left: 2px; top: 30px; width: 5px; height: 5px; border-radius: 50%; background: #e95420; }
    .apps { margin-top: auto; height: 64px; display: grid; place-items: center; padding-right: 1px; }

    .window { display: flex; flex-direction: column; min-width: 0; min-height: 0; }
    .head { flex: none; height: 52px; background: linear-gradient(#3b3a36, #504d46 70%); color: #dfdbd2; }
    .title { display: grid; grid-template-columns: 1fr auto 1fr; align-items: center; height: 29px; }
    .title h1 { grid-column: 2; margin: 0; font: 700 14px/20px "Open Sans", sans-serif; }
    .wbtns { display: flex; justify-content: flex-end; gap: 4px; padding-right: 5px; }
    .wbtn { width: 16px; height: 16px; border-radius: 50%; background: linear-gradient(#8b8981, #6b6961); color: #33322e; }
    .wbtn.close { background: linear-gradient(#f58a62, #e2511f); }
    .menu { display: flex; gap: 14px; padding-left: 7px; height: 23px; align-items: center; }

    .options { flex: none; display: flex; align-items: center; height: 33px; padding-bottom: 1px; }
    .obtn { width: 30px; height: 30px; display: grid; place-items: center; }
    .obtn.off { opacity: 0.4; }
    .vsep { width: 2px; align-self: stretch; border-left: 1px solid #dcdad6; }
    .olabel { width: 21px; padding-right: 4px; text-align: right; color: #93908a; }
    .olabel.wide { width: 23px; }
    .obtn.link { width: 32px; }
    .spin + .olabel, .spin + .drop { margin-left: 4px; }
    .toggles { display: flex; gap: 2px; margin-left: 3px; }
    .toggle {
      width: 28px; height: 31px; display: grid; place-items: center;
      border: 1px solid #9b9891; border-radius: 4px; background: linear-gradient(#cbc9c6, #dddbd8);
    }

    .spin {
      display: flex; flex: none; height: 30px; border: 1px solid #aaa69f; border-radius: 4px; overflow: hidden;
      background: linear-gradient(#f6f6f5, #fff 8px);
    }
    .spin input { flex: 1; min-width: 0; padding-left: 7px; outline: 0; }
    .spin button { width: 29px; border-left: 1px solid #d6d3cf; background: #f3f2f1; display: grid; place-items: center; }
    .spin.off { color: #a09d97; border-color: #c9c6c1; background: #f6f5f4; }
    .w-xy { width: 163px; }
    .w-wh { width: 160px; }
    .w-dim { width: 184px; }
    .w-scale { width: 168px; height: 28px; }
    .w-op { width: 105px; height: 32px; }
    .w-zoom { width: 101px; height: 32px; }
    .w-rot { width: 109px; height: 32px; }
    .w-zoom button, .w-rot button { width: 22px; }
    .w-zoom input { padding-left: 10px; }
    .w-rot input { padding-left: 13px; }

    .drop { display: inline-grid; align-items: center; height: 31px; border: 1px solid #b1ada6; border-radius: 4px; background: linear-gradient(#fff, #efeeec); }
    .drop select { grid-area: 1 / 1; appearance: none; height: 29px; padding: 0 22px 0 6px; outline: 0; }
    .drop::after { content: ""; grid-area: 1 / 1; justify-self: end; margin-right: 7px; border: 5px solid transparent; border-top: 7px solid #111; border-bottom: 0; pointer-events: none; }
    .drop.layer { font: 700 12px/20px "Open Sans", sans-serif; }

    .work { flex: 1; min-height: 0; display: grid; grid-template-columns: 38px minmax(0, 1fr) 11px minmax(0, 732px) 38px 30px; }
    .bar { display: flex; flex-direction: column; }
    .bar hr { width: 100%; height: 2px; margin: 0; border: 0; border-top: 1px solid #d9d6d2; flex: none; }
    .bar button { flex: none; height: 36px; display: grid; place-items: center; }
    .bar.tools button { padding-right: 1px; }
    .bar.snaps button { height: 28px; }
    .bar button.on { border: 1px solid #9b9891; border-radius: 4px; background: linear-gradient(#cfcdca, #dedcd9); }

    .editor { display: grid; grid-template: 18px minmax(0, 1fr) 19px / 20px minmax(0, 1fr) 19px; min-width: 0; }
    .editor > * { min-width: 0; min-height: 0; overflow: hidden; }
    .guide-lock { display: grid; place-items: center; }
    .surface, .ruler { width: 100%; height: 100%; }
    .ruler text { font: 10px/12px "Open Sans", sans-serif; fill: #555; }
    .canvas { background: #fff; }
    .mini { width: 15px; height: 16px; margin: 1px 2px; border: 1px solid #aaa69f; border-radius: 4px; background: #fafafa; display: grid; place-items: center; }
    .vscroll { display: grid; grid-template: 205fr 457fr 206fr / 5px; padding-left: 10px; }
    .vscroll i { grid-row: 2; background: #f2926c; border-radius: 1px; }
    .hscroll { grid-column: 1 / 3; display: grid; grid-template-columns: 280fr 444fr 261fr; align-content: center; padding-top: 6px; }
    .hscroll i { grid-column: 2; height: 5px; background: #f2926c; }
    .handle { display: grid; align-content: center; padding-left: 4px; gap: 3px; }
    .handle i { width: 2px; height: 2px; background: #333; }

    .dock { display: flex; flex-direction: column; min-height: 0; padding: 16px 16px 17px 0; }
    .dock-tab {
      align-self: flex-start; display: flex; align-items: center; gap: 1px; height: 27px; padding: 0 9px 0 2px;
      border: 1px solid #c5c2bd; border-bottom: 0; border-radius: 5px 5px 0 0; background: linear-gradient(#fff, #f3f2f1);
    }
    .dock-tab button { margin-left: 10px; color: #8a8782; line-height: 16px; }
    .dock-body { flex: 1; min-height: 0; display: flex; flex-direction: column; border: 1px solid #c5c2bd; border-radius: 2px; padding: 1px; }
    .tabs { display: flex; height: 27px; flex: none; }
    .tabs button { padding: 0 8px 0 7px; border-right: 1px solid #d6d3cf; }
    .tabs button.cur { padding: 0 6px; border: 1px solid #c5c2bd; border-bottom: 0; border-radius: 5px 5px 0 0; background: #f7f6f5; }
    .tabs .cur span { display: block; border: 1px solid #f0a88c; border-radius: 3px; background: #fae6de; line-height: 17px; }
    .page { flex: 1; min-height: 0; display: flex; flex-direction: column; padding: 1px 4px 8px; border: 1px solid #c5c2bd; border-radius: 2px; }
    h2 { margin: 0; font: 700 14px/24px "Open Sans", sans-serif; }
    .unit { display: flex; align-items: center; gap: 8px; margin: 1px 0 16px; }
    .list { flex: 1; min-height: 0; overflow: hidden; border: 1px solid #b9b5ae; background: #fff; color: #3c3c3c; }
    table { border-collapse: collapse; width: 100%; }
    td { padding: 0 0 0 3px; height: 23px; }
    .c1 { width: 198px; }
    .orient { display: flex; align-items: center; gap: 22px; height: 26px; padding-right: 10px; }
    .orient > :first-child { margin-right: auto; }
    label { display: flex; align-items: center; gap: 5px; }

    input[type="radio"], input[type="checkbox"] { appearance: none; width: 13px; height: 13px; border: 1px solid #bdb9b3; background: #fff; display: grid; place-items: center; flex: none; }
    input[type="radio"] { border-radius: 50%; }
    input[type="checkbox"] { border-radius: 3px; }
    input[type="radio"]:checked, input[type="checkbox"]:checked { background: #dd5a2c; border-color: #b8431a; }
    input[type="radio"]:checked::after { content: ""; width: 5px; height: 5px; border-radius: 50%; background: #fff; }
    input[type="checkbox"]:checked::after { content: ""; width: 4px; height: 8px; border: solid #fff; border-width: 0 2px 2px 0; transform: rotate(40deg); margin-top: -2px; }

    fieldset { margin: 0 0 3px; padding: 4px 10px 0; border: 1px solid #c5c2bd; border-radius: 3px; min-width: 0; flex: none; }
    legend { padding: 0; margin-left: -11px; line-height: 20px; }
    .row { display: flex; align-items: center; justify-content: space-between; white-space: nowrap; }
    .row > label { gap: 8px; }
    .row > .off { color: #a09d97; }
    .row.tight { margin-right: -6px; }
    .custom { margin-bottom: 2px; }
    summary { list-style: none; display: flex; align-items: center; gap: 9px; height: 27px; }
    summary::before { content: ""; border: 5px solid transparent; border-left: 6px solid #111; border-right: 0; }

    .cols { display: grid; grid-template-columns: 330fr 371fr; margin-top: 16px; padding-left: 4px; flex: none; }
    .cols > div { display: grid; }
    .back { grid-template-rows: 24px 22px 28px 22px 24px; }
    .edge { grid-template-rows: 22px 24px 24px 24px 26px; }
    .cols h2 { line-height: inherit; align-self: center; }
    .cols label { gap: 9px; }
    .cols .check { padding-left: 6px; gap: 5px; }
    .swatch { width: 44px; height: 22px; padding: 4px; border: 1px solid #b1ada6; border-radius: 4px; background: linear-gradient(#fff, #efeeec); }
    .swatch i { display: block; height: 12px; border-radius: 1px; margin: 0 1px; }
    .swatch .alpha { background: linear-gradient(90deg, transparent 50%, #fff 50%), repeating-conic-gradient(#b3b3b3 0 25%, #cbcbcb 0 50%) 0 0 / 16px 12px; }
    .swatch .solid { background: #666; }

    .palette { flex: none; display: flex; height: 23px; padding-left: 1px; }
    .palette button { flex: 1; min-width: 0; height: 13px; }
    .palette .none { background: #fff; }
    .palette .more { flex: none; width: 31px; height: 23px; display: grid; justify-content: center; align-content: end; padding-bottom: 4px; }
    .under { flex: none; display: grid; grid-template-columns: 404fr 1447fr; height: 5px; margin-left: 1px; }
    .under i { background: #f2926c; }

    .status { flex: none; display: flex; align-items: center; height: 35px; padding: 0 12px 0 1px; white-space: nowrap; }
    .paint { display: grid; grid-template-columns: 54px 82px; column-gap: 28px; line-height: 17px; }
    .paint > :nth-child(odd) { text-align: right; }
    .status label { gap: 4px; }
    .status .opacity { margin-right: 5px; }
    .status .lay { padding: 0 4px; display: flex; gap: 6px; }
    .status .msg { flex: 1; margin: 0 0 0 3px; overflow: hidden; }
    .xy { display: grid; grid-template-columns: 26px 43px; line-height: 17px; margin: 0 11px; }
    .xy > :nth-child(even) { text-align: right; }
    .status .rot { margin-left: 11px; }
    .status .rot, .status .zm { gap: 12px; }
  `;

  private icon(name: string, size = 24) {
    return html`<svg width=${size} height=${size} viewBox="0 0 24 24" aria-hidden="true">${glyphs[name]}</svg>`;
  }

  private spin(cls: string, id: string, value: string, off = false): TemplateResult {
    return html`<span class=${classMap({ spin: true, [cls]: true, off })}>
      <input id=${id} .value=${value} ?disabled=${off} />
      <button aria-label="Disminuir" ?disabled=${off}><svg width="11" height="11"><path d="M1 5.500h9" stroke="currentColor" stroke-width="2"/></svg></button>
      <button aria-label="Aumentar" ?disabled=${off}><svg width="11" height="11"><path d="M0 5.500h11M5.500 0v11" stroke="currentColor" stroke-width="2"/></svg></button>
    </span>`;
  }

  private drop(id: string, value: string, cls = "") {
    return html`<span class="drop ${cls}"><select id=${id} aria-label=${value}><option>${value}</option></select></span>`;
  }

  private bar(cls: string, groups: string[][], pressed: string[] = []) {
    return html`<div class="bar ${cls}" role="toolbar">
      ${groups.map((g, i) => html`${i ? html`<hr />` : ""}${g.map((n) => {
        const key = n.replace("!", "");
        return html`<button class=${classMap({ on: n.endsWith("!") || pressed.includes(key) })} aria-label=${key}>${this.icon(key)}</button>`;
      })}`)}
    </div>`;
  }

  private hRuler() {
    return html`<svg class="ruler" aria-hidden="true">
      <path d="M0 17.500h4000" stroke="#333"/>
      ${ticks(-125, 390).map((n) => {
        const x = Math.round(origin.x + n * scale) + 0.5;
        const top = n % 50 === 0 ? 0 : n % 25 === 0 ? 8 : 12;
        return svg`<path d=${`M${x} ${top}V18`} stroke="#444"/>${n % 50 === 0 ? svg`<text x=${x + 2} y="10">${n}</text>` : ""}`;
      })}
      <path d="M791 13h9l-4.500 5z" fill="#333"/>
    </svg>`;
  }

  private vRuler() {
    return html`<svg class="ruler" aria-hidden="true">
      <path d="M19.500 0v4000" stroke="#333"/>
      ${ticks(-65, 390).map((n) => {
        const y = Math.round(origin.y + n * scale) + 0.5;
        const left = n % 50 === 0 ? 2 : n % 25 === 0 ? 10 : 14;
        return svg`<path d=${`M${left} ${y}H20`} stroke="#444"/>
          ${n % 50 === 0 ? String(n).split("").map((d, i) => svg`<text x="11" y=${y + 9 + i * 8} text-anchor="middle">${d}</text>`) : ""}`;
      })}
      <path d="M14 419v9l5-4.500z" fill="#333"/>
    </svg>`;
  }

  private gradients() {
    const lin = (id: string, a: string, b: string, diag = true) =>
      svg`<linearGradient id=${id} x1="0" y1="0" x2=${diag ? 1 : 0} y2="1"><stop offset="0" stop-color=${a}/><stop offset="1" stop-color=${b}/></linearGradient>`;
    return html`<svg class="defs" aria-hidden="true"><defs>
      ${lin("g-blue", "#f2f7fc", "#86a9cd")}${lin("g-pink", "#fff", "#f3a6a6")}${lin("g-yellow", "#fffbd8", "#f6de6a")}
      ${lin("g-green", "#2f9d4b", "#eef8ef")}${lin("g-mesh", "#6fa0e0", "#63c07a")}${lin("g-steel", "#cfe6f6", "#3d77a8")}
      ${lin("g-grey", "#f2f2f2", "#9a9a9a", false)}${lin("g-orange", "#fba06e", "#e2541c", false)}${lin("g-page", "#fff", "#bbb")}
      ${lin("g-gold", "#ffe78a", "#e8920c", false)}${lin("g-sheet", "#fff", "#dcdcdc", false)}${lin("g-silver", "#b4b4b2", "#8d8d8b", false)}
      ${lin("g-bag", "#f0743c", "#e8763c", false)}${lin("g-help", "#6fa9dc", "#2f6cac", false)}${lin("g-snow", "#fff", "#999", false)}
      ${lin("g-fox", "#ffb81e", "#f0246c", false)}${lin("g-skin", "#fdeee6", "#f0b49a")}
    </defs></svg>`;
  }

  private topbar() {
    return html`<header class="topbar">
      <div class="topbar-left">
        <span>Actividades</span>
        <span class="app-menu"><svg width="15" height="16" viewBox="0 0 15 16"><path d="M7.500 0L0 8c0 2 3 2 4 3 0 2 2 4 4 5 1-2 2-3 3-4 0-2 4-2 4-4z" fill="#111"/><path d="M7.500 1L4 5l2 1 2-1 2 1 1-1z" fill="#ddd"/></svg>Inkscape <i class="caret"></i></span>
      </div>
      <time>jue 09:21</time>
      <div class="topbar-right">
        <span class="lang">es <i class="caret"></i></span>
        <svg width="16" height="16" viewBox="0 0 16 16"><path d="M0 10h5v5H0zM11 10h5v5h-5zM5 0h5v2H5z" fill="#8c8980"/><path d="M6 5c0-3 5-3 5 0 0 2-2.500 2-2.500 4.500" fill="none" stroke="#dfdbd2" stroke-width="1.800"/><path d="M7.500 12h2v2h-2z" fill="#dfdbd2"/></svg>
        <svg width="17" height="16" viewBox="0 0 17 16"><path d="M0 5h3l4-4v13l-4-4H0z" fill="#dfdbd2"/><path d="M8.500 5v5M11 3c2 3 2 5 0 8M14 1c2 4 2 6 1 8" fill="none" stroke="#8c8980" stroke-width="1.600"/><path d="M11.500 11l4 4M15.500 11l-4 4" stroke="#dfdbd2" stroke-width="1.800"/></svg>
        <svg width="16" height="16" viewBox="0 0 16 16"><path d="M5 3a6 6 0 1 0 6 0M8 1v7" fill="none" stroke="#dfdbd2" stroke-width="2"/></svg>
        <i class="caret"></i>
      </div>
    </header>`;
  }

  private launcher() {
    return html`<nav class="launcher" aria-label="Lanzador">
      ${launchers.map((l) => html`<button class=${classMap({ launch: true, active: !!l.active, running: !!l.running })} aria-label=${l.name}>
        <svg width="46" height="46" viewBox="0 0 48 48">${l.art}</svg></button>`)}
      <button class="apps" aria-label="Mostrar aplicaciones"><svg width="30" height="30" viewBox="0 0 30 30" fill="#eee">
        ${[3, 15, 27].map((y) => [3, 15, 27].map((x) => svg`<circle cx=${x} cy=${y} r="3"/>`))}</svg></button>
    </nav>`;
  }

  private options() {
    return html`<div class="options" role="toolbar">
      ${optionGroups.map((g) => html`${g.map((n) => {
        const key = n.replace("-", "");
        return html`<button class=${classMap({ obtn: true, off: n !== key })} aria-label=${key}>${this.icon(key)}</button>`;
      })}<i class="vsep"></i>`)}
      <label class="olabel" for="ox">X:</label>${this.spin("w-xy", "ox", "39,195", true)}
      <label class="olabel" for="oy">Y:</label>${this.spin("w-xy", "oy", "109,877", true)}
      <label class="olabel wide" for="ow">W:</label>${this.spin("w-wh", "ow", "21,990", true)}
      <button class="obtn link" aria-label="Bloquear proporción">${this.icon("lockOpen")}</button>
      <label class="olabel wide" for="oh">H:</label>${this.spin("w-wh", "oh", "17,539", true)}
      ${this.drop("ounit", "mm")}
      <div class="toggles">${["affStroke", "affCorner", "affGradient", "affPattern"].map((n) => html`<button class="toggle" aria-label=${n}>${this.icon(n)}</button>`)}</div>
    </div>`;
  }

  private editor() {
    return html`<main class="editor">
      <button class="guide-lock" aria-label="Bloquear guías">${this.icon("lock", 18)}</button>
      ${this.hRuler()}
      <button class="mini" aria-label="Zoom fijo"><svg width="7" height="12" viewBox="0 0 7 12"><path d="M1 3l2-2h3v10H3V4H1z" fill="#fff" stroke="#777"/></svg></button>
      ${this.vRuler()}
      <div class="canvas"><svg class="surface" aria-label="Documento">
        <rect x=${origin.x + 2} y=${origin.y + 2} width=${600 * scale} height=${300 * scale + 1} fill="#555"/>
        <rect x=${origin.x + 0.5} y=${origin.y + 0.5} width=${600 * scale} height=${300 * scale} fill="#fff" stroke="#666"/>
      </svg></div>
      <div class="vscroll"><i></i></div>
      <div class="hscroll"><i></i></div>
      <button class="mini" aria-label="Gestión de color"><svg width="13" height="15" viewBox="0 0 13 15"><path d="M1 0l11 9-9 6z" fill="#3cc"/><path d="M1 0l7 6-6 3z" fill="#2d2"/><path d="M8 6l4 3-6 2z" fill="#f44"/><path d="M2 9l4 1 1 3-4 2z" fill="#33f"/><path d="M6 10l6-1-5 4z" fill="#f3c"/><path d="M1 0l11 9-9 6z" fill="none" stroke="#333" stroke-width=".7"/></svg></button>
    </main>`;
  }

  private dock() {
    const check = (label: string, on: boolean) => html`<label class="check"><input type="checkbox" ?checked=${on} />${label}</label>`;
    return html`<aside class="dock">
      <div class="dock-tab">${this.icon("gear", 22)}Propiedades del documento<button aria-label="Cerrar">×</button></div>
      <div class="dock-body">
        <div class="tabs" role="tablist">${tabs.map((t, i) => html`<button role="tab" class=${classMap({ cur: i === 0 })}><span>${t}</span></button>`)}</div>
        <div class="page">
          <h2>General</h2>
          <div class="unit"><label for="du">Unidad de visualización:</label>${this.drop("du", "mm")}</div>
          <h2>Tamaño de página</h2>
          <div class="list"><table><tbody>${pageSizes.map(([n, d]) => html`<tr><td class="c1">${n}</td><td>${d}</td></tr>`)}</tbody></table></div>
          <div class="orient"><span>Orientación:</span>
            <label><input type="radio" name="orient" />Vertical</label>
            <label><input type="radio" name="orient" checked />Horizontal</label></div>
          <fieldset class="custom"><legend>Tamaño personalizado</legend>
            <div class="row">
              <label>Ancho: ${this.spin("w-dim", "pw", "600,00000")}</label>
              <label>Altura: ${this.spin("w-dim", "ph", "300,00000")}</label>
              <label>Unidades: ${this.drop("pu", "mm")}</label>
            </div>
            <details><summary>Ajustar página a contenido...</summary></details>
          </fieldset>
          <fieldset><legend>Escalar</legend>
            <div class="row tight">
              <label>Escala x: ${this.spin("w-scale", "sx", "1,00000")}</label>
              <label class="off">Escala y: ${this.spin("w-scale", "sy", "1,00000", true)}</label>
              <span>Unidades de usuario por mm.</span>
            </div>
            <details><summary>Viewbox...</summary></details>
          </fieldset>
          <div class="cols">
            <div class="back">
              <h2>Color de fondo</h2>
              ${check("Fondo de damero", false)}
              <label>Color de fondo: <button class="swatch" aria-label="Color de fondo"><i class="alpha"></i></button></label>
              <h2>Mostrar</h2>
              ${check("Usar antialiasing", true)}
            </div>
            <div class="edge">
              <h2>Borde</h2>
              ${check("Mostrar borde de la página", true)}
              ${check("Borde encima del dibujo", false)}
              ${check("Mostrar sombra del papel", true)}
              <label>Color del borde: <button class="swatch" aria-label="Color del borde"><i class="solid"></i></button></label>
            </div>
          </div>
        </div>
      </div>
    </aside>`;
  }

  private status() {
    return html`<footer class="status">
      <div class="paint"><span>Relleno:</span><span>N/D</span><span>Trazo:</span><span>N/D</span></div>
      <label class="opacity">O: ${this.spin("w-op", "op", "100", true)}</label>
      <i class="vsep"></i>
      <span class="lay">${this.icon("eye")}${this.icon("lockOpen")}</span>
      ${this.drop("layer", "•Capa 1", "layer")}
      <p class="msg">No se han seleccionado objetos. Haga clic, Shift+clic, Alt+rueda encima de objetos o arrastre para seleccionar los objetos.</p>
      <i class="vsep"></i>
      <div class="xy"><span>X:</span><span>273,61</span><span>Y:</span><span>145,02</span></div>
      <label class="zm">Z: ${this.spin("w-zoom", "zm", "52%")}</label>
      <label class="rot">R: ${this.spin("w-rot", "rt", "0,00°")}</label>
    </footer>`;
  }

  render() {
    return html`${this.gradients()}
      <div class="desktop">
        ${this.topbar()} ${this.launcher()}
        <section class="window">
          <header class="head">
            <div class="title"><h1>*Documento nuevo 1 - Inkscape</h1>
              <div class="wbtns">
                <button class="wbtn" aria-label="Minimizar"><svg width="16" height="16"><path d="M4.500 8h7" stroke="currentColor"/></svg></button>
                <button class="wbtn" aria-label="Maximizar"><svg width="16" height="16"><path d="M4.500 5.500h7v5h-7z" fill="none" stroke="currentColor"/></svg></button>
                <button class="wbtn close" aria-label="Cerrar"><svg width="16" height="16"><path d="M5 5l6 6M11 5l-6 6" stroke="currentColor" stroke-width="1.500"/></svg></button>
              </div></div>
            <nav class="menu">${menus.map((m) => html`<button>${m}</button>`)}</nav>
          </header>
          ${this.options()}
          <div class="work">
            ${this.bar("tools", toolGroups, ["select"])} ${this.editor()}
            <div class="handle"><i></i><i></i><i></i></div>
            ${this.dock()} ${this.bar("commands", commandGroups)} ${this.bar("snaps", snapGroups)}
          </div>
          <div class="palette">
            <button class="none" aria-label="Ninguno"><svg width="100%" height="13" viewBox="0 0 19 13" preserveAspectRatio="none"><path d="M0 0l19 13M19 0L0 13" stroke="#7a0c0c" stroke-width="1.500"/></svg></button>
            ${palette.map((c) => html`<button style="background:#${c}" aria-label="#${c}"></button>`)}
            <button class="more" aria-label="Paletas"><svg width="5" height="10"><path d="M5 0v10L0 5z" fill="#333"/></svg></button>
          </div>
          <div class="under"><i></i></div>
          ${this.status()}
        </section>
      </div>`;
  }
}
